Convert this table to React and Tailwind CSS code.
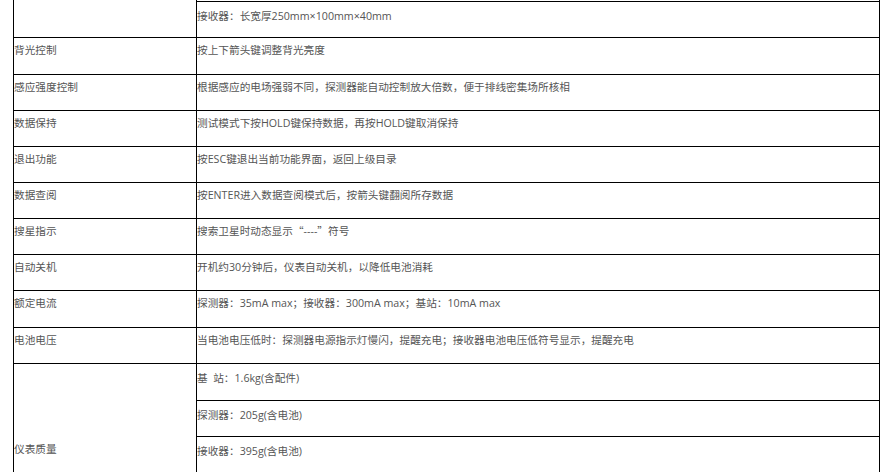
// Spec table: left label column, right value column, 1px black grid
const FONT = { fontFamily: '"Open Sans", "Noto Sans CJK SC", sans-serif' };

const ROWS = [
  { label: "背光控制", value: "按上下箭头键调整背光亮度", tall: true },
  { label: "感应强度控制", value: "根据感应的电场强弱不同，探测器能自动控制放大倍数，便于排线密集场所核相" },
  { label: "数据保持", value: "测试模式下按HOLD键保持数据，再按HOLD键取消保持" },
  { label: "退出功能", value: "按ESC键退出当前功能界面，返回上级目录" },
  { label: "数据查阅", value: "按ENTER进入数据查阅模式后，按箭头键翻阅所存数据" },
  {
    label: "搜星指示",
    value: (
      <>
        搜索卫星时动态显示<span className="font-['Noto_Sans_CJK_SC']">“</span>----<span className="font-['Noto_Sans_CJK_SC']">”</span>符号
      </>
    ),
  },
  { label: "自动关机", value: "开机约30分钟后，仪表自动关机，以降低电池消耗" },
  { label: "额定电流", value: "探测器：35mA max；接收器：300mA max；基站：10mA max", tall: true },
  { label: "电池电压", value: "当电池电压低时：探测器电源指示灯慢闪，提醒充电；接收器电池电压低符号显示，提醒充电" },
];

const WEIGHTS = ["基  站：1.6kg(含配件)", "探测器：205g(含电池)", "接收器：395g(含电池)"];

function Row({ label, value, tall }) {
  return (
    <div className={`flex border-t border-black ${tall ? "h-[37px]" : "h-[36px]"}`}>
      <div className="w-[182px] pt-[4px] leading-[16px]">{label}</div>
      <div className="flex-1 border-l border-black pt-[4px] leading-[16px]">{value}</div>
    </div>
  );
}

export default function App() {
  return (
    <div className="h-[472px] overflow-hidden bg-white text-[10.67px] text-[#555]" style={FONT}>
      <div className="ml-[13px] w-[867px] border-l border-r border-black">
        {/* tail of the size group, scrolled off the top */}
        <div className="flex h-[37px]">
          <div className="w-[182px]" />
          <div className="flex-1 border-l border-black pt-px">
            <div className="h-[36px] border-t border-black pt-[6px] leading-[16px]">
              接收器：长宽厚250mm×100mm×40mm
            </div>
          </div>
        </div>

        {ROWS.map(r => (
          <Row key={r.label} {...r} />
        ))}

        {/* weight group */}
        <div className="flex border-t border-black">
          <div className="w-[182px] pt-[77px] leading-[16px]">仪表质量</div>
          <div className="flex-1 border-l border-black">
            {WEIGHTS.map((w, i) => (
              <div
                key={w}
                className={`pt-[6px] leading-[16px] whitespace-pre ${i > 0 ? "border-t border-black" : ""} ${i === 2 ? "h-[60px]" : "h-[36px]"}`}
              >
                {w}
              </div>
            ))}
          </div>
        </div>
      </div>
    </div>
  );
}
